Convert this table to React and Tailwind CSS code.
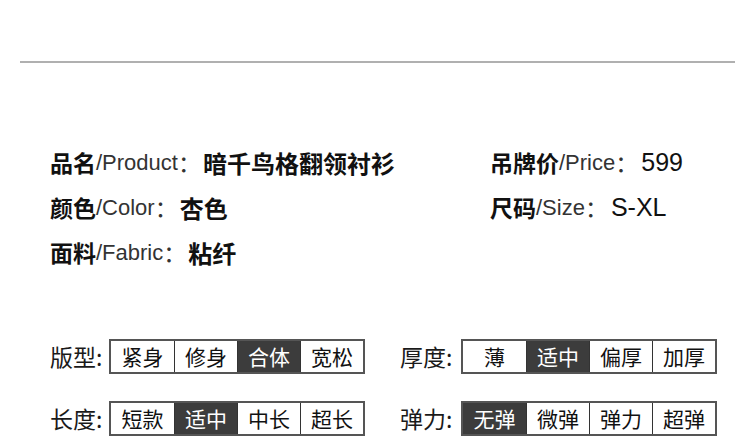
import React from "react";

const cjk = { fontFamily: '"Noto Sans CJK SC", sans-serif' };

const infoLeft = [
  { zh: "品名", en: "/Product", value: "暗千鸟格翻领衬衫" },
  { zh: "颜色", en: "/Color", value: "杏色" },
  { zh: "面料", en: "/Fabric", value: "粘纤" },
];

const infoRight = [
  { zh: "吊牌价", en: "/Price", value: "599" },
  { zh: "尺码", en: "/Size", value: "S-XL" },
];

const specs = [
  [
    { label: "版型:", options: ["紧身", "修身", "合体", "宽松"], active: 2 },
    { label: "厚度:", options: ["薄", "适中", "偏厚", "加厚"], active: 1 },
  ],
  [
    { label: "长度:", options: ["短款", "适中", "中长", "超长"], active: 1 },
    { label: "弹力:", options: ["无弹", "微弹", "弹力", "超弹"], active: 0 },
  ],
];

function InfoRow({ item, latinValue }) {
  return (
    <div className="flex items-center h-[45px] whitespace-nowrap">
      <span className="text-[23px] font-bold text-[#111]" style={cjk}>{item.zh}</span>
      <span className="text-[22px] text-[#333] font-['Liberation_Sans',sans-serif]">{item.en}</span>
      <span className="text-[23px] text-[#333]" style={cjk}>：</span>
      {latinValue ? (
        <span className="ml-[3px] text-[25px] text-[#111] font-['Liberation_Sans',sans-serif]">{item.value}</span>
      ) : (
        <span className="ml-[2px] text-[24px] font-bold text-[#111]" style={cjk}>{item.value}</span>
      )}
    </div>
  );
}

function SpecGroup({ spec, labelWidth }) {
  return (
    <div className="flex items-center">
      <div className={`${labelWidth} text-[23px] text-[#1a1a1a] leading-none`} style={cjk}>{spec.label}</div>
      <div className="flex border-2 border-[#555]">
        {spec.options.map((opt, i) => (
          <div
            key={opt + i}
            className={`w-[63px] h-[31px] flex items-center justify-center text-[21px] leading-none ${i > 0 ? "border-l border-[#333]" : ""} ${i === spec.active ? "bg-[#3c3c3c] text-white" : "bg-white text-[#111]"}`}
            style={cjk}
          >
            {opt}
          </div>
        ))}
      </div>
    </div>
  );
}

export default function App() {
  return (
    <div className="w-[750px] h-[445px] bg-white overflow-hidden">
      <div className="pt-[61px] pl-[20px] pr-[15px]">
        <div className="h-[2px] bg-[#b0b0b0]" />
      </div>

      <div className="mt-[77px] flex pl-[50px]">
        <div className="w-[440px]">
          {infoLeft.map((item) => (
            <InfoRow key={item.zh} item={item} />
          ))}
        </div>
        <div>
          {infoRight.map((item) => (
            <InfoRow key={item.zh} item={item} latinValue />
          ))}
        </div>
      </div>

      <div className="mt-[64px] pl-[50px] flex flex-col gap-[27px]">
        {specs.map((row, r) => (
          <div key={r} className="flex">
            <div className="w-[350px]">
              <SpecGroup spec={row[0]} labelWidth="w-[59px]" />
            </div>
            <SpecGroup spec={row[1]} labelWidth="w-[61px]" />
          </div>
        ))}
      </div>
    </div>
  );
}
